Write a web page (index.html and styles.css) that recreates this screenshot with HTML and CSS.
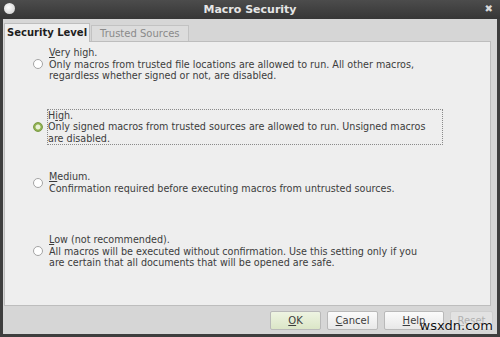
FILE: index.html
```html
<!DOCTYPE html>
<html lang="en">
<head>
    <meta charset="UTF-8">
    <title>Macro Security</title>
    <link rel="stylesheet" href="styles.css">
</head>
<body>
    <div class="window">
        <div class="titlebar">
            <span class="app-icon"></span>
            <span class="title">Macro Security</span>
            <span class="close">&#x2716;</span>
        </div>

        <div class="content">
            <div class="tabs">
                <div class="tab active">Security Level</div>
                <div class="tab">Trusted Sources</div>
            </div>

            <div class="panel">
                <div class="option opt-veryhigh">
                    <span class="radio"></span>
                    <div class="label">
                        <u>V</u>ery high.<br>
                        Only macros from trusted file locations are allowed to run. All other macros,<br>
                        regardless whether signed or not, are disabled.
                    </div>
                </div>

                <div class="option opt-high">
                    <span class="radio checked"></span>
                    <div class="label focused">
                        H<u>i</u>gh.<br>
                        Only signed macros from trusted sources are allowed to run. Unsigned macros<br>
                        are disabled.
                    </div>
                </div>

                <div class="option opt-medium">
                    <span class="radio"></span>
                    <div class="label">
                        <u>M</u>edium.<br>
                        Confirmation required before executing macros from untrusted sources.
                    </div>
                </div>

                <div class="option opt-low">
                    <span class="radio"></span>
                    <div class="label">
                        <u>L</u>ow (not recommended).<br>
                        All macros will be executed without confirmation. Use this setting only if you<br>
                        are certain that all documents that will be opened are safe.
                    </div>
                </div>
            </div>

            <div class="buttons">
                <button class="btn default"><u>O</u>K</button>
                <button class="btn"><u>C</u>ancel</button>
                <button class="btn help"><u>H</u>elp</button>
                <button class="btn reset" disabled><u>R</u>eset</button>
            </div>
        </div>

        <div class="watermark">wsxdn.com</div>
    </div>
</body>
</html>
```

FILE: styles.css
```css
body {
    margin: 0;
    padding: 0;
    font-family: 'DejaVu Sans', sans-serif;
    font-size: 9.6px;
    color: #3c3c3c;
}

.window {
    position: relative;
    width: 500px;
    height: 337px;
    box-sizing: border-box;
    background-color: #d6d6d6;
    border: 3px solid #3e3e3e;
    border-top: none;
    display: flex;
    flex-direction: column;
}

.titlebar {
    height: 19px;
    margin: 0 -3px;
    background: linear-gradient(#4c4c4c, #363636);
    display: flex;
    align-items: center;
    justify-content: center;
    position: relative;
}

.app-icon {
    position: absolute;
    left: 4px;
    top: 3px;
    width: 11px;
    height: 11px;
    border-radius: 50%;
    background: radial-gradient(circle at 40% 40%, #ffffff, #c9c9c9);
}

.title {
    color: #e6e6e6;
    font-weight: bold;
    font-size: 11px;
}

.close {
    position: absolute;
    right: 7px;
    top: 3px;
    color: #d8d8d8;
    font-size: 10px;
}

.content {
    flex: 1;
    display: flex;
    flex-direction: column;
    padding: 4px 4px 0 1px;
}

.tabs {
    display: flex;
    align-items: flex-end;
    height: 18px;
}

.tab {
    height: 15px;
    padding: 0 8px;
    font-size: 10px;
    line-height: 15px;
    color: #8a8a8a;
    background-color: #dcdcdc;
    border: 1px solid #c2c2c2;
    border-bottom: none;
    margin-left: 1px;
}

.tab.active {
    height: 18px;
    line-height: 18px;
    padding: 0 2px;
    margin-left: 0;
    color: #1e1e1e;
    font-weight: bold;
    background-color: #eeeeee;
    border-color: #bdbdbd;
    position: relative;
    top: 1px;
}

.panel {
    height: 265px;
    margin-right: 2px;
    background-color: #eeeeee;
    border: 1px solid #bdbdbd;
    box-sizing: border-box;
    padding-left: 28px;
}

.option {
    display: flex;
    align-items: center;
    gap: 4px;
}

.label {
    line-height: 11.5px;
    padding: 0 0 0 1px;
    border: 1px solid transparent;
}

.label.focused {
    border: 1px dotted #8a8a8a;
    padding: 0 5px 0 0;
    width: 389px;
}

.opt-veryhigh { margin-top: 4px; }
.opt-high { margin-top: 26px; }
.opt-medium { margin-top: 25px; }
.opt-low { margin-top: 38px; }

.radio {
    width: 8px;
    height: 8px;
    border-radius: 50%;
    border: 1px solid #a4a4a4;
    background-color: #ffffff;
    flex-shrink: 0;
}

.radio.checked {
    border-color: #7a9a45;
    background: radial-gradient(circle, #e9f1d4 0 2px, #8fb04f 3px);
}

.buttons {
    display: flex;
    justify-content: flex-end;
    gap: 6px;
    margin-top: 5px;
}

.btn {
    height: 19px;
    padding: 0;
    font-family: 'DejaVu Sans', sans-serif;
    font-size: 10px;
    color: #3c3c3c;
    background: linear-gradient(#fbfbfb, #e8e8e8);
    border: 1px solid #b9b9b9;
    border-radius: 2px;
    width: 51px;
}

.btn.default {
    background: linear-gradient(#eef4e2, #dbe6c7);
}

.btn.help {
    width: 60px;
}

.btn.reset {
    width: 43px;
    color: #b0b0b0;
    background: #e2e2e2;
    border-color: #cfcfcf;
}

.watermark {
    position: absolute;
    right: 4px;
    bottom: 1px;
    font-family: 'DejaVu Sans', sans-serif;
    font-size: 13px;
    color: #111111;
    text-shadow: 0 0 2px #ffffff;
}
```
